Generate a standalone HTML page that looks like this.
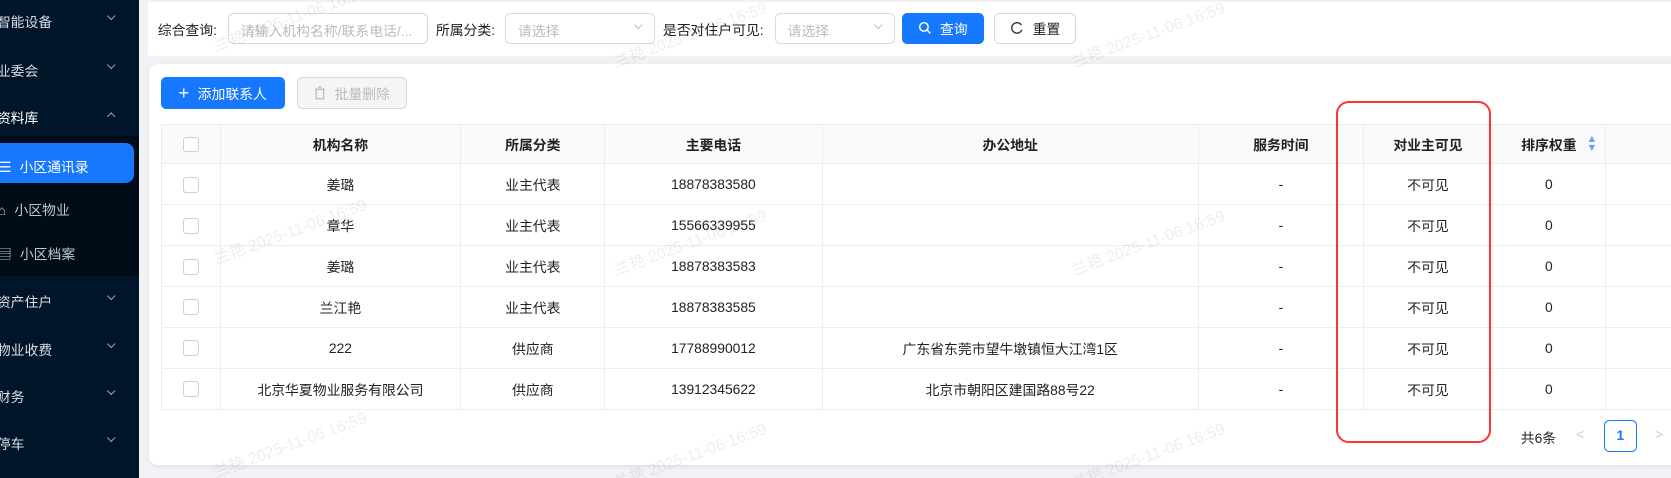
<!DOCTYPE html>
<html><head><meta charset="utf-8">
<style>
*{box-sizing:border-box;margin:0;padding:0}
html,body{width:1671px;height:478px;overflow:hidden;background:#f0f2f5}
#w{width:1568px;height:449px;position:relative;zoom:1.06569;font-family:"Liberation Sans","Noto Sans CJK SC",sans-serif;font-size:13px;color:#222;overflow:hidden}
.a{position:absolute}
.side{left:0;top:0;width:130px;height:449px;background:#001529}
.mi{position:absolute;left:-3px;color:#d9dde3;font-size:13px}
.chev{position:absolute;left:101px;width:6px;height:6px;border-right:1.3px solid #aab;border-bottom:1.3px solid #aab;transform:rotate(45deg)}
.sub{position:absolute;left:0;top:128px;width:130px;height:131px;background:#000c17}
.lbl{position:absolute;top:18px;font-size:13px;color:#222}
.inp{position:absolute;top:12px;height:29px;border:1px solid #d9d9d9;border-radius:5px;background:#fff;color:#bbb;padding:6px 11px;font-size:13px;white-space:nowrap;overflow:hidden}
.sc{position:absolute;right:12px;top:8px;width:6px;height:6px;border-right:1px solid #bbb;border-bottom:1px solid #bbb;transform:rotate(45deg)}
.btn{position:absolute;height:30px;border-radius:5px;font-size:13px;display:flex;align-items:center;justify-content:center;gap:8px}
table{border-collapse:collapse;position:absolute;left:151px;top:116px;table-layout:fixed;width:1425px}
td,th{border:1px solid #ededed;text-align:center;font-size:13px;height:38.4px;padding:0}
th{background:#fafafa;font-weight:bold;height:37px}
.cb{display:inline-block;width:15px;height:15px;border:1px solid #d0d0d0;border-radius:3px;background:#fff;vertical-align:middle}
.wm{position:absolute;color:rgba(0,0,0,0.07);font-size:15px;transform:rotate(-20deg);white-space:nowrap;transform-origin:left bottom}
</style></head><body><div id="w">
<div class="a side">
 <div class="mi" style="top:10px">智能设备</div><div class="chev" style="top:12px"></div>
 <div class="mi" style="top:56px">业委会</div><div class="chev" style="top:58px"></div>
 <div class="sub"></div>
 <div class="mi" style="top:100px;color:#fff">资料库</div><div class="chev" style="top:106px;transform:rotate(225deg)"></div>
 <div class="a" style="left:0;top:134px;width:126px;height:38px;background:#1677ff;border-radius:0 8px 8px 0"></div>
 <div class="mi" style="top:146px;left:-1px;color:#fff">☰ <span style="margin-left:4px">小区通讯录</span></div>
 <div class="mi" style="top:187px;left:-2px;color:#c0c6cf">⌂ <span style="margin-left:4px">小区物业</span></div>
 <div class="mi" style="top:228px;left:-2px;color:#c0c6cf">▤ <span style="margin-left:4px">小区档案</span></div>
 <div class="mi" style="top:273px">资产住户</div><div class="chev" style="top:275px"></div>
 <div class="mi" style="top:318px">物业收费</div><div class="chev" style="top:320px"></div>
 <div class="mi" style="top:362px">财务</div><div class="chev" style="top:364px"></div>
 <div class="mi" style="top:406px">停车</div><div class="chev" style="top:408px"></div>
</div>
<div class="a" style="left:139px;top:2px;width:1440px;height:51px;background:#fff"></div>
<div class="lbl" style="left:148px">综合查询:</div>
<div class="inp" style="left:214px;width:188px">请输入机构名称/联系电话/...</div>
<div class="lbl" style="left:409px">所属分类:</div>
<div class="inp" style="left:474px;width:141px">请选择<div class="sc"></div></div>
<div class="lbl" style="left:622px">是否对住户可见:</div>
<div class="inp" style="left:727px;width:113px">请选择<div class="sc"></div></div>
<div class="btn" style="left:846px;top:12px;width:77px;height:29px;background:#1677ff;color:#fff"><svg width="13" height="13" viewBox="0 0 14 14"><circle cx="6" cy="6" r="4.3" fill="none" stroke="#fff" stroke-width="1.5"/><path d="M9 9l3.5 3.5" stroke="#fff" stroke-width="1.5"/></svg>查询</div>
<div class="btn" style="left:933px;top:12px;width:77px;height:29px;background:#fff;border:1px solid #d9d9d9;color:#222"><svg width="13" height="13" viewBox="0 0 14 14"><path d="M11.5 4A5.3 5.3 0 1 0 12 9" fill="none" stroke="#333" stroke-width="1.4"/></svg>重置</div>
<div class="a" style="left:140px;top:60px;width:1440px;height:376px;background:#fff;border-radius:8px;box-shadow:0 1px 4px rgba(0,0,0,0.08)"></div>
<div class="btn" style="left:151px;top:72px;width:116px;background:#1677ff;color:#fff"><span style="font-size:17px;line-height:1">+</span>添加联系人</div>
<div class="btn" style="left:279px;top:72px;width:103px;background:#f5f5f5;border:1px solid #d9d9d9;color:#bbb"><svg width="11" height="13" viewBox="0 0 11 13"><path d="M1 3h9M4 1h3M2 3v9h7V3" fill="none" stroke="#bbb" stroke-width="1.2"/></svg>批量删除</div>
<table>
<colgroup><col style="width:55px"><col style="width:226px"><col style="width:135px"><col style="width:204px"><col style="width:353px"><col style="width:155px"><col style="width:121px"><col style="width:106px"><col style="width:70px"></colgroup>
<tr><th><span class="cb"></span></th><th>机构名称</th><th>所属分类</th><th>主要电话</th><th>办公地址</th><th>服务时间</th><th>对业主可见</th><th style="position:relative">排序权重<span style="position:absolute;left:88px;top:10px;color:#6aa0f5;font-size:10px;line-height:8px">▲<br>▼</span></th><th></th></tr>
<tr><td><span class="cb"></span></td><td>姜璐</td><td>业主代表</td><td>18878383580</td><td></td><td>-</td><td>不可见</td><td>0</td><td></td></tr>
<tr><td><span class="cb"></span></td><td>章华</td><td>业主代表</td><td>15566339955</td><td></td><td>-</td><td>不可见</td><td>0</td><td></td></tr>
<tr><td><span class="cb"></span></td><td>姜璐</td><td>业主代表</td><td>18878383583</td><td></td><td>-</td><td>不可见</td><td>0</td><td></td></tr>
<tr><td><span class="cb"></span></td><td>兰江艳</td><td>业主代表</td><td>18878383585</td><td></td><td>-</td><td>不可见</td><td>0</td><td></td></tr>
<tr><td><span class="cb"></span></td><td>222</td><td>供应商</td><td>17788990012</td><td>广东省东莞市望牛墩镇恒大江湾1区</td><td>-</td><td>不可见</td><td>0</td><td></td></tr>
<tr><td><span class="cb"></span></td><td>北京华夏物业服务有限公司</td><td>供应商</td><td>13912345622</td><td>北京市朝阳区建国路88号22</td><td>-</td><td>不可见</td><td>0</td><td></td></tr>
</table>
<div class="a" style="left:1427px;top:401px">共6条</div>
<div class="a" style="left:1479px;top:400px;color:#ccc">&lt;</div>
<div class="a" style="left:1505px;top:394px;width:31px;height:30px;border:1px solid #1677ff;border-radius:5px;color:#1677ff;font-weight:bold;text-align:center;line-height:28px">1</div>
<div class="a" style="left:1553px;top:400px;color:#ccc">&gt;</div>
<div class="a" style="left:1254px;top:95px;width:145px;height:321px;border:2px solid #f33;border-radius:12px"></div>
<div class="wm" style="left:205px;top:30px">兰艳 2025-11-06 16:59</div>
<div class="wm" style="left:580px;top:45px">兰艳 2025-11-06 16:59</div>
<div class="wm" style="left:1010px;top:45px">兰艳 2025-11-06 16:59</div>
<div class="wm" style="left:205px;top:230px">兰艳 2025-11-06 16:59</div>
<div class="wm" style="left:580px;top:240px">兰艳 2025-11-06 16:59</div>
<div class="wm" style="left:1010px;top:240px">兰艳 2025-11-06 16:59</div>
<div class="wm" style="left:205px;top:430px">兰艳 2025-11-06 16:59</div>
<div class="wm" style="left:580px;top:440px">兰艳 2025-11-06 16:59</div>
<div class="wm" style="left:1010px;top:440px">兰艳 2025-11-06 16:59</div>
</div></body></html>
